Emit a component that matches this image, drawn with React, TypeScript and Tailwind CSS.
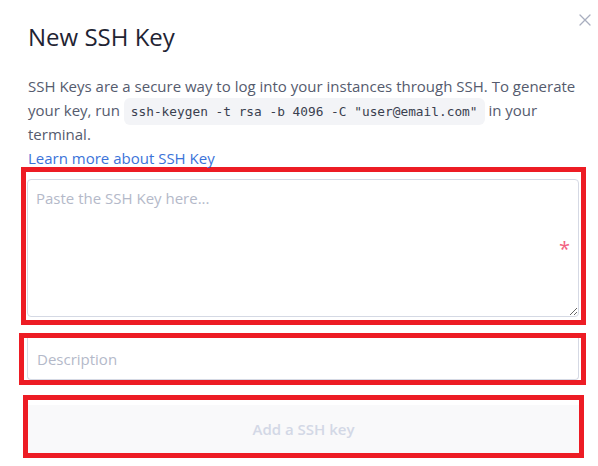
import React from "react";

const CloseIcon = () => (
    <svg width="12" height="12" viewBox="0 0 12 12" fill="none" stroke="#a9aebf" strokeWidth="1.3" strokeLinecap="round">
        <path d="M1 1L11 11M11 1L1 11" />
    </svg>
);

export default function App() {
    return (
        <div className="relative min-h-[466px] bg-white pl-[28px] pr-[20px] pt-[22px] font-['Open_Sans',sans-serif]">
            <button className="absolute right-[7px] top-[14px] p-0">
                <CloseIcon />
            </button>

            <h1 className="text-[24px] leading-[30px] text-[#1f2433]">New SSH Key</h1>

            <p className="mt-[22px] text-[15px] leading-[24px] text-[#555b6e]">
                SSH Keys are a secure way to log into your instances through SSH. To generate your key, run{" "}
                <code className="whitespace-nowrap rounded-[6px] bg-[#f3f4f7] px-[7px] py-[6px] font-['DejaVu_Sans_Mono',monospace] text-[12.8px] leading-[16px] text-[#3a3f4f]">
                    ssh-keygen -t rsa -b 4096 -C "user@email.com"
                </code>{" "}
                in your terminal.
            </p>
            <a className="block text-[15px] leading-[24px] text-[#3b73d9]">Learn more about SSH Key</a>

            {/* key field */}
            <div className="-mt-[3px] -ml-[7px] -mr-[8px] border-[5px] border-[#ed1c24] pb-[3px] pl-[1px] pr-[2px] pt-[7px]">
                <div className="relative">
                    <textarea
                        placeholder="Paste the SSH Key here..."
                        className="block h-[138px] w-full rounded-[4px] border border-[#d5d9e4] px-[8px] py-[6px] text-[15px] leading-[24px] text-[#333] outline-none placeholder:text-[#b4b9c9]"
                    />
                    <span className="absolute right-[9px] top-[60px] text-[20px] leading-[20px] text-[#f2607f]">*</span>
                </div>
            </div>

            {/* description */}
            <div className="mt-[8px] -ml-[9px] -mr-[8px] border-[5px] border-[#ed1c24] pl-[3px] pr-[2px]">
                <input
                    placeholder="Description"
                    className="block h-[42px] w-full rounded-b-[4px] border border-t-0 border-[#d5d9e4] px-[9px] text-[15px] text-[#333] outline-none placeholder:text-[#b4b9c9]"
                />
            </div>

            {/* submit */}
            <div className="mt-[10px] -ml-[5px] -mr-[6px] border-[5px] border-[#ed1c24] pt-[5px]">
                <button
                    disabled
                    className="block h-[48px] w-full bg-[#f9f9fa] text-[15px] font-semibold text-[#d3d8e6]"
                >
                    Add a SSH key
                </button>
            </div>
        </div>
    );
}
